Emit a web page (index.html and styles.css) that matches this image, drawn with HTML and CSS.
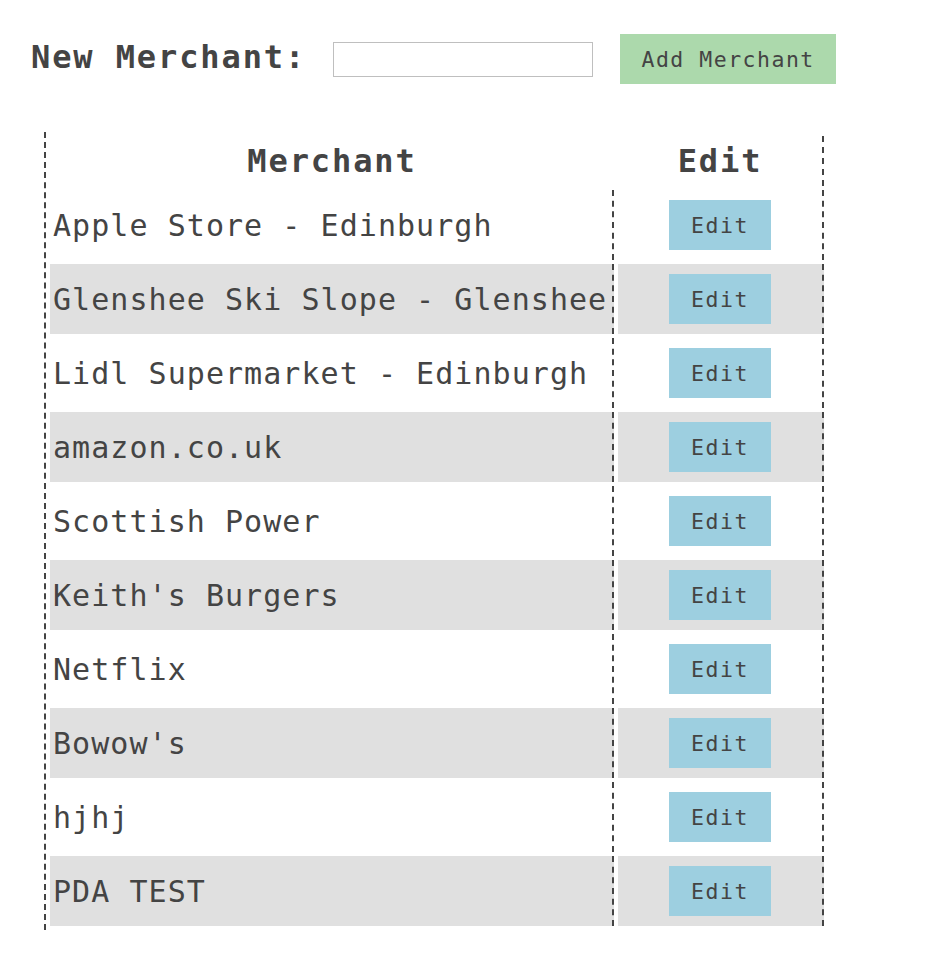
FILE: index.html
```html
<!DOCTYPE html>
<html lang="en">
<head>
<meta charset="utf-8">
<title>Merchants</title>
<link rel="stylesheet" href="styles.css">
</head>
<body>
<div class="page">
  <form class="new-form">
    <label class="new-label" for="merchant">New Merchant:</label>
    <input class="new-input" id="merchant" type="text">
    <button class="add-btn" type="button">Add Merchant</button>
  </form>
  <table class="merchants">
    <thead>
      <tr>
        <th class="th-name">Merchant</th>
        <th class="th-edit">Edit</th>
      </tr>
    </thead>
    <tbody>
      <tr><td class="name">Apple Store - Edinburgh</td><td class="edit"><button class="edit-btn" type="button">Edit</button></td></tr>
      <tr><td class="name">Glenshee Ski Slope - Glenshee</td><td class="edit"><button class="edit-btn" type="button">Edit</button></td></tr>
      <tr><td class="name">Lidl Supermarket - Edinburgh</td><td class="edit"><button class="edit-btn" type="button">Edit</button></td></tr>
      <tr><td class="name">amazon.co.uk</td><td class="edit"><button class="edit-btn" type="button">Edit</button></td></tr>
      <tr><td class="name">Scottish Power</td><td class="edit"><button class="edit-btn" type="button">Edit</button></td></tr>
      <tr><td class="name">Keith's Burgers</td><td class="edit"><button class="edit-btn" type="button">Edit</button></td></tr>
      <tr><td class="name">Netflix</td><td class="edit"><button class="edit-btn" type="button">Edit</button></td></tr>
      <tr><td class="name">Bowow's</td><td class="edit"><button class="edit-btn" type="button">Edit</button></td></tr>
      <tr><td class="name">hjhj</td><td class="edit"><button class="edit-btn" type="button">Edit</button></td></tr>
      <tr><td class="name">PDA TEST</td><td class="edit"><button class="edit-btn" type="button">Edit</button></td></tr>
    </tbody>
  </table>
</div>
</body>
</html>
```

FILE: styles.css
```css
html, body {
  margin: 0;
  padding: 0;
  background: #ffffff;
}

body {
  font-family: "DejaVu Sans Mono", "Liberation Mono", monospace;
  color: #444444;
}

.page {
  padding: 34px 0 0 31px;
}

.new-form {
  display: flex;
  align-items: center;
  margin: 0;
}

.new-label {
  font-size: 32px;
  font-weight: bold;
  letter-spacing: 1.9px;
  line-height: 40px;
  margin-right: 27px;
  position: relative;
  top: -2px;
}

.new-input {
  box-sizing: border-box;
  width: 260px;
  height: 35px;
  border: 1px solid #bfbfbf;
  background: #ffffff;
  margin: 0 27px 0 0;
  padding: 0 6px;
  font-family: inherit;
  font-size: 18px;
}

.add-btn {
  box-sizing: border-box;
  width: 216px;
  height: 50px;
  border: none;
  background: #acd9ac;
  color: #444444;
  font-family: inherit;
  font-size: 21.5px;
  letter-spacing: 1.5px;
  padding: 0;
  cursor: pointer;
}

.merchants {
  margin: 48px 0 0 13px;
  border-collapse: separate;
  border-spacing: 4px;
  border-left: 2px dashed #444444;
  table-layout: fixed;
}

.merchants th,
.merchants td {
  box-sizing: border-box;
  padding: 0;
}

.th-name,
.th-edit {
  height: 50px;
  font-size: 32px;
  font-weight: bold;
  letter-spacing: 1.9px;
  text-align: center;
  vertical-align: middle;
}

.th-name {
  width: 564px;
}

.th-edit {
  width: 206px;
  border-right: 2px dashed #444444;
}

.name {
  height: 70px;
  font-size: 30px;
  letter-spacing: 1.05px;
  white-space: nowrap;
  padding-left: 3px !important;
  border-right: 2px dashed #444444;
  vertical-align: middle;
}

.edit {
  height: 70px;
  text-align: center;
  vertical-align: middle;
  border-right: 2px dashed #444444;
}

.merchants tbody tr:nth-child(even) td {
  background: #e0e0e0;
}

.edit-btn {
  box-sizing: border-box;
  width: 102px;
  height: 50px;
  border: none;
  background: #9dcfe0;
  color: #444444;
  font-family: inherit;
  font-size: 21.5px;
  letter-spacing: 1.5px;
  padding: 0;
  display: block;
  margin: 0 auto;
  cursor: pointer;
}
```
